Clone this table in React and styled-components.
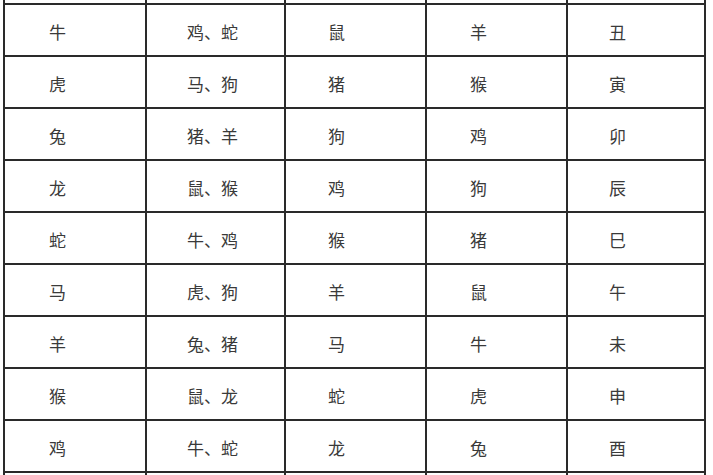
import styled, { createGlobalStyle } from 'styled-components';

// - - - GLOBAL - - - //
const Global = createGlobalStyle`
  html, body {
    margin: 0;
    padding: 0;
    background: #fff;
    overflow: hidden;
  }
`;

// - - - TABLE GRID - - - //
const Grid = styled.div`
  display: grid;
  grid-template-columns: 142px 139px 141px 141px 138px;
  grid-auto-rows: 52px;
  width: max-content;
  margin: -47px 0 0 3px;
  border-left: 2px solid #2a2a2a;
  font-family: "Noto Sans CJK SC", "Noto Sans", sans-serif;
  font-size: 17px;
  color: #3a3a3a;
`;

const Cell = styled.div`
  box-sizing: border-box;
  display: flex;
  align-items: center;
  padding-left: ${(p) => p.$pad}px;
  padding-top: 2px;
  border-right: 2px solid #2a2a2a;
  border-bottom: 2px solid #2a2a2a;
  white-space: nowrap;
`;

const pads = [44, 40, 42, 43, 41];

// header row and the next row sit outside the frame, only their lines show
const blank = ['', '', '', '', ''];

const rows = [
  ['牛', '鸡、蛇', '鼠', '羊', '丑'],
  ['虎', '马、狗', '猪', '猴', '寅'],
  ['兔', '猪、羊', '狗', '鸡', '卯'],
  ['龙', '鼠、猴', '鸡', '狗', '辰'],
  ['蛇', '牛、鸡', '猴', '猪', '巳'],
  ['马', '虎、狗', '羊', '鼠', '午'],
  ['羊', '兔、猪', '马', '牛', '未'],
  ['猴', '鼠、龙', '蛇', '虎', '申'],
  ['鸡', '牛、蛇', '龙', '兔', '酉'],
];

const App = () => {
  return (
    <>
      <Global />
      <Grid>
        {[blank, ...rows, blank].map((row, r) =>
          row.map((txt, c) => (
            <Cell key={`${r}-${c}`} $pad={pads[c]}>
              {txt}
            </Cell>
          ))
        )}
      </Grid>
    </>
  );
};

export default App;
